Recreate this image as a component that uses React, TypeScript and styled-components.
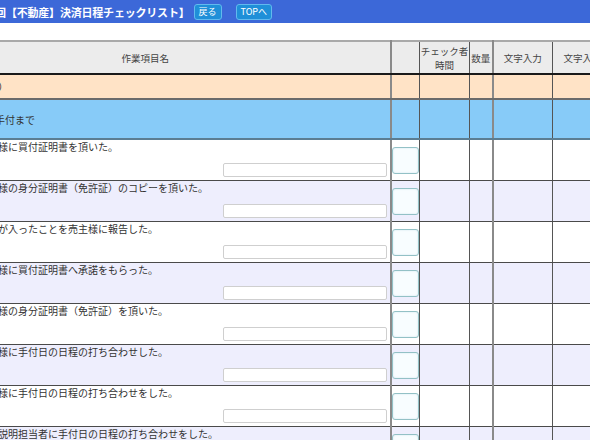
import styled, { createGlobalStyle } from "styled-components";

const GlobalStyle = createGlobalStyle`
  html, body {
    margin: 0;
    padding: 0;
    background: #fff;
    overflow: hidden;
  }
  body {
    font-family: "Noto Sans CJK JP", "Noto Sans", sans-serif;
    color: #333;
  }
`;

// the page is scrolled sideways, so the left part sits off screen
const Page = styled.div`
  margin-left: -100px;
  width: 712px;
`;

const TitleBar = styled.div`
  height: 23px;
  background: #3c68d8;
  display: flex;
  align-items: center;
  padding-left: 78px;
`;

const Title = styled.h1`
  margin: 0 4px 0 0;
  font-size: 11px;
  font-weight: 700;
  color: #fff;
  white-space: nowrap;
  letter-spacing: -0.2px;
`;

const NavButton = styled.button`
  height: 16px;
  padding: 0 4px;
  margin-right: 14px;
  background: #1f8fd8;
  border: 1px solid #62b9ee;
  border-radius: 3px;
  color: #fff;
  font-family: inherit;
  font-size: 9px;
  line-height: 14px;
  cursor: pointer;
`;

const Table = styled.table`
  margin-top: 17px;
  width: 712px;
  border-collapse: collapse;
  table-layout: fixed;
  font-size: 10px;
`;

const HeadCell = styled.th<{ $split?: boolean }>`
  height: 31px;
  padding: 0;
  background: #ececec;
  border-top: 2px solid #a9a9a9;
  border-bottom: 2px solid #1a1a1a;
  border-left: 1px solid #555;
  border-right: ${(p) => (p.$split ? "2px solid #8a8a8a" : "1px solid #555")};
  font-weight: 400;
  font-size: 9.5px;
  line-height: 14px;
  color: #444;
  text-align: center;
  vertical-align: middle;
`;

const SectionRow = styled.tr<{ $tone: "orange" | "blue" }>`
  background: ${(p) => (p.$tone === "orange" ? "#ffe3c6" : "#87cbf8")};
  height: ${(p) => (p.$tone === "orange" ? "25px" : "40px")};
  td {
    border-bottom: 2px solid ${(p) => (p.$tone === "orange" ? "#6b6b6b" : "#5b7d92")};
  }
`;

const ItemRow = styled.tr<{ $alt?: boolean }>`
  background: ${(p) => (p.$alt ? "#eeeefd" : "#fff")};
  height: 39.5px;
  td {
    border-bottom: 1px solid #4a4a4a;
  }
`;

const Cell = styled.td<{ $split?: boolean }>`
  padding: 0;
  border-left: 1px solid #555;
  border-right: ${(p) => (p.$split ? "2px solid #8a8a8a" : "1px solid #555")};
  vertical-align: middle;
`;

const LabelCell = styled(Cell)<{ $shift: number }>`
  padding: 0 4px 0 2px;
  text-indent: ${(p) => p.$shift}px;
  white-space: nowrap;
  overflow: hidden;
`;

const ItemCell = styled(Cell)`
  padding: 1px 3px 3px 2px;
  vertical-align: top;
`;

const ItemText = styled.div`
  font-size: 10px;
  line-height: 12px;
  color: #333;
  white-space: nowrap;
`;

const InputLine = styled.div`
  display: flex;
  justify-content: flex-end;
  margin-top: 10px;
`;

const TextInput = styled.input`
  box-sizing: border-box;
  width: 164px;
  height: 14px;
  padding: 0 2px;
  border: 1px solid #cfcfcf;
  border-radius: 2px;
  background: #fff;
  font-size: 9px;
  outline: none;
`;

const CheckCell = styled(Cell)`
  text-align: center;
`;

const CheckBox = styled.div`
  box-sizing: border-box;
  width: 27px;
  height: 27px;
  margin: 0 auto;
  border: 1px solid #93c1c6;
  border-radius: 3px;
  background: #f8fdff;
  box-shadow: inset 0 0 2px rgba(120, 180, 200, 0.35);
`;

const sections: { label: string; tone: "orange" | "blue"; shift: number }[] = [
  { label: "事前）", tone: "orange", shift: 0 },
  { label: "契約手付まで", tone: "blue", shift: -4 },
];

const items = [
  "買主様に買付証明書を頂いた。",
  "買主様の身分証明書（免許証）のコピーを頂いた。",
  "買付が入ったことを売主様に報告した。",
  "売主様に買付証明書へ承諾をもらった。",
  "売主様の身分証明書（免許証）を頂いた。",
  "買主様に手付日の日程の打ち合わせした。",
  "売主様に手付日の日程の打ち合わせをした。",
  "宅建説明担当者に手付日の日程の打ち合わせをした。",
];

function EmptyCells() {
  return (
    <>
      <Cell />
      <Cell $split />
      <Cell />
      <Cell />
    </>
  );
}

export default function App() {
  return (
    <>
      <GlobalStyle />
      <Page>
        <TitleBar>
          <Title>第3回【不動産】決済日程チェックリスト】</Title>
          <NavButton>戻る</NavButton>
          <NavButton>TOPへ</NavButton>
        </TitleBar>

        <Table>
          <colgroup>
            <col style={{ width: 75 }} />
            <col style={{ width: 415 }} />
            <col style={{ width: 29 }} />
            <col style={{ width: 50 }} />
            <col style={{ width: 23 }} />
            <col style={{ width: 60 }} />
            <col style={{ width: 60 }} />
          </colgroup>
          <thead>
            <tr>
              <HeadCell colSpan={2} $split>作業項目名</HeadCell>
              <HeadCell />
              <HeadCell>
                チェック者
                <br />
                時間
              </HeadCell>
              <HeadCell $split>数量</HeadCell>
              <HeadCell>文字入力</HeadCell>
              <HeadCell>文字入力</HeadCell>
            </tr>
          </thead>
          <tbody>
            {sections.map((s) => (
              <SectionRow key={s.label} $tone={s.tone}>
                <Cell />
                <LabelCell $split $shift={s.shift}>{s.label}</LabelCell>
                <Cell />
                <EmptyCells />
              </SectionRow>
            ))}
            {items.map((text, i) => (
              <ItemRow key={text} $alt={i % 2 === 1}>
                <Cell>{i + 1}</Cell>
                <ItemCell $split>
                  <ItemText>{text}</ItemText>
                  <InputLine>
                    <TextInput type="text" />
                  </InputLine>
                </ItemCell>
                <CheckCell>
                  <CheckBox />
                </CheckCell>
                <EmptyCells />
              </ItemRow>
            ))}
          </tbody>
        </Table>
      </Page>
    </>
  );
}
